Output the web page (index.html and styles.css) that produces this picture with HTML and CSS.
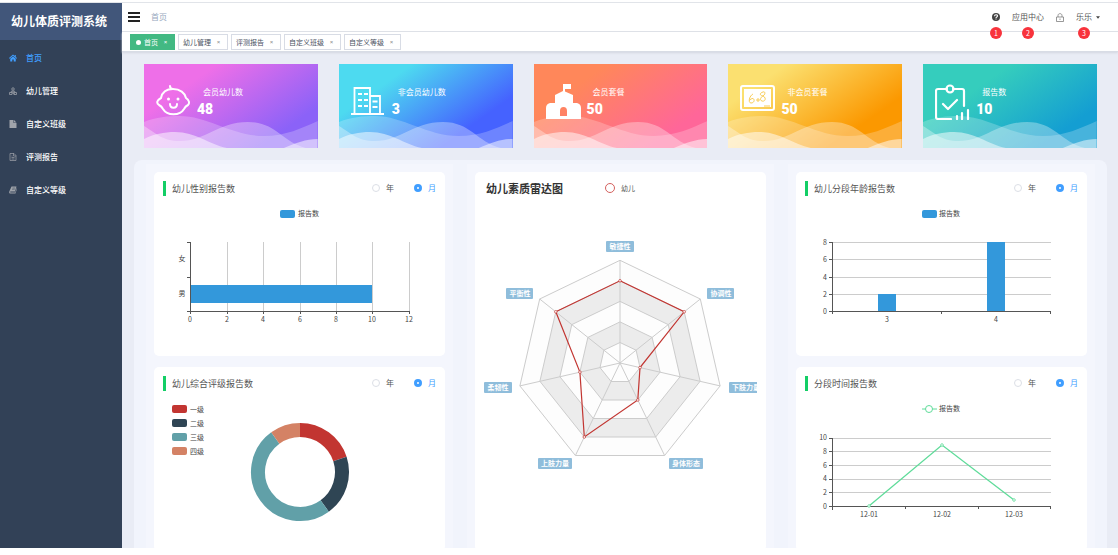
FILE: index.html
```html
<!DOCTYPE html>
<html lang="zh-CN">
<head>
<meta charset="utf-8">
<title>幼儿体质评测系统</title>
<link rel="stylesheet" href="styles.css">
</head>
<body>
<svg class="defs" aria-hidden="true">
  <symbol id="waves" viewBox="0 0 174 84" preserveAspectRatio="none">
    <path fill="#fff" fill-opacity=".22" d="M0 58C12 53 24 52 36 52C64 52 88 72 120 72C142 72 158 64 174 57V84H0Z"/>
    <path fill="#fff" fill-opacity=".32" d="M0 62C12 69 18 77 36 77C62 77 74 58 104 58C132 58 138 78 162 84H0Z"/>
    <path fill="#fff" fill-opacity=".5" d="M0 75C10 70 20 68 31 68C52 68 64 80 83 84H0ZM140 84C152 79 162 75 174 75V84Z"/>
  </symbol>
</svg>
<div class="app">
  <aside class="sidebar">
    <h1 class="logo">幼儿体质评测系统</h1>
    <nav class="menu">
      <a class="menu-item active" href="#"><svg class="menu-icon" viewBox="0 0 16 16"><path fill="currentColor" d="M8 1 0 8l1 1.4 7-6 7 6L16 8l-2.5-2.2V2h-2v2zM8 4.8 2.5 9.5V15h4v-4h3v4h4V9.500z"/></svg>首页</a>
      <a class="menu-item" href="#"><svg class="menu-icon" viewBox="0 0 16 16"><g fill="none" stroke="currentColor" stroke-width="1.5"><circle cx="8" cy="4" r="2.5"/><path d="M5 8h6l1 3M5 8l-1 3M8 8v4M1 11h5v4H1zM6 12h4v3M10 11h5v4h-5z"/></g></svg>幼儿管理</a>
      <a class="menu-item" href="#"><svg class="menu-icon" viewBox="0 0 16 16"><path fill="currentColor" d="M1 0h8v6h6v10H1zM10 0l5 5h-5z"/></svg>自定义班级</a>
      <a class="menu-item" href="#"><svg class="menu-icon" viewBox="0 0 16 16"><path fill="none" stroke="currentColor" stroke-width="1.400" d="M2 1h8l4 4v10H2zM9 1v5h5M5 9h6M5 12h6M5 6h2"/></svg>评测报告</a>
      <a class="menu-item" href="#"><svg class="menu-icon" viewBox="0 0 16 16"><path fill="currentColor" d="M5 1h10l-3 10H3c-1 0-1 2 0 2h9.500L15.500 4 16 5l-3 10H2C0 15 0 12 1 10z"/><path stroke="#324157" d="M7 4h5.500M6 6.500h5.500"/></svg>自定义等级</a>
    </nav>
  </aside>
  <div class="body">
    <header class="topbar">
      <button class="burger" aria-label="菜单"><span></span><span></span><span></span></button>
      <span class="crumb">首页</span>
      <div class="tools">
        <a class="tool" href="#" aria-label="帮助"><svg class="help" viewBox="0 0 16 16"><circle cx="8" cy="8" r="8" fill="#444"/><path fill="none" stroke="#fff" stroke-width="2.200" d="M5 6.500C5 2.500 11 2.500 11 6c0 2-3 2-3 4M8 11.200v2"/></svg><span class="mark">1</span></a>
        <a class="tool" href="#">应用中心<span class="mark">2</span></a>
        <button class="tool" aria-label="锁屏"><svg class="lock" viewBox="0 0 16 18"><path fill="none" stroke="#777" stroke-width="1.500" d="M1 8h14v9H1zM4 8V5c0-5 8-5 8 0v3M8 11v3"/></svg></button>
        <button class="user"><span class="tool">乐乐<span class="mark">3</span></span><svg class="caret" viewBox="0 0 8 5"><path fill="#444" d="M0 0h8L4 5z"/></svg></button>
      </div>
    </header>
    <nav class="tabs">
      <a class="tab current" href="#"><i class="dot"></i>首页<b>×</b></a>
      <a class="tab" href="#">幼儿管理<b>×</b></a>
      <a class="tab" href="#">评测报告<b>×</b></a>
      <a class="tab" href="#">自定义班级<b>×</b></a>
      <a class="tab" href="#">自定义等级<b>×</b></a>
    </nav>
    <main class="main">
      <section class="stats">
        <article class="stat pink"><svg class="waves"><use href="#waves"/></svg>
          <svg class="stat-icon" viewBox="0 0 36 36"><g fill="none" stroke="#fff" stroke-width="2" stroke-linecap="round"><path d="M17 5C10 5 6 9 5 14C1 16 0 19 3 21C5 22 6 23 7 25C11 32 24 32 28 25C29 23 30 22 32 21C34 19 33 16 30 14C29 9 24 5 17 5C15 5 14 4 14 2"/><path d="M14 20C14 25 21 25 21 20"/></g><circle cx="12.500" cy="15" r="1.500" fill="#fff"/><circle cx="22" cy="15" r="1.500" fill="#fff"/></svg>
          <div class="stat-text"><span class="stat-label">会员幼儿数</span><strong>48</strong></div></article>
        <article class="stat blue"><svg class="waves"><use href="#waves"/></svg>
          <svg class="stat-icon" viewBox="0 0 36 36"><path fill="none" stroke="#fff" stroke-width="1.800" d="M0 30h33M3.500 30V4H19v26M19 12h10v18M7 10h4M13 10h4M7 16h4M13 16h4M7 22h4M13 22h4M21.500 17.500h5M21.500 23h5"/></svg>
          <div class="stat-text"><span class="stat-label">非会员幼儿数</span><strong>3</strong></div></article>
        <article class="stat orange"><svg class="waves"><use href="#waves"/></svg>
          <svg class="stat-icon" viewBox="0 0 36 36"><path fill="#fff" fill-rule="evenodd" d="M17 0h8v5h-6v2.500L27 11V19h4q4 1 4 5v11H0V24q0-4 4-5h5V11l8-4zM14 31v-4q0-4 3.500-4t3.500 4v5h-7z"/></svg>
          <div class="stat-text"><span class="stat-label">会员套餐</span><strong>50</strong></div></article>
        <article class="stat yellow"><svg class="waves"><use href="#waves"/></svg>
          <svg class="stat-icon" viewBox="0 0 36 36"><rect x="1" y="2" width="33" height="24" rx="2" fill="none" stroke="#fff" stroke-width="2"/><rect x="4" y="5" width="27" height="18" fill="#fff"/><g fill="none" stroke="#f9cd58" stroke-width="1"><path d="M13 10C9 12 8 19 11 19C15 19 15 14 12 14.500L9.500 16M16 16h4M18 14v4M23 8C19 9 20 12 23 12C27 14 25 18 22 17C19 16 21 13 23 12C26 10 25 7 23 8M24 22h6"/></g></svg>
          <div class="stat-text"><span class="stat-label">非会员套餐</span><strong>50</strong></div></article>
        <article class="stat teal"><svg class="waves"><use href="#waves"/></svg>
          <svg class="stat-icon" viewBox="0 0 36 36"><g fill="none" stroke="#fff" stroke-width="2.200" stroke-linecap="round" stroke-linejoin="round"><path d="M12 5H3q-2 0-2 2v26q0 2 2 2h13M18 5h9q2 0 2 2v15M8 20l5 5 9-9"/><circle cx="15" cy="5" r="3.500"/><path d="M22 32v3M27 29v6M33 26v9"/></g></svg>
          <div class="stat-text"><span class="stat-label">报告数</span><strong>10</strong></div></article>
      </section>

      <section class="panel">
        <div class="column">
          <article class="card">
            <header class="card-head"><h2>幼儿性别报告数</h2><div class="period"><label><input type="radio" name="p1">年</label><label><input type="radio" name="p1" checked>月</label></div></header>
            <svg class="chart" viewBox="0 0 291 152">
              <rect x="126" y="6" width="15" height="8" rx="2" fill="#3398db"/><text x="144" y="12">报告数</text>
              <path class="grid" d="M73 38v69M109 38v69M146 38v69M182 38v69M218 38v69M255 38v69"/>
              <rect x="36" y="81" width="182" height="18" fill="#3398db"/>
              <path class="axis" d="M36 38v72M33 38h3M33 73h3M33 107h222M73 107v3M109 107v3M146 107v3M182 107v3M218 107v3M255 107v3"/>
              <g class="mid"><text x="28" y="57">女</text><text x="28" y="92">男</text>
              <text x="36" y="118">0</text><text x="73" y="118">2</text><text x="109" y="118">4</text><text x="146" y="118">6</text><text x="182" y="118">8</text><text x="218" y="118">10</text><text x="255" y="118">12</text></g>
            </svg>
          </article>
          <article class="card">
            <header class="card-head"><h2>幼儿综合评级报告数</h2><div class="period"><label><input type="radio" name="p2">年</label><label><input type="radio" name="p2" checked>月</label></div></header>
            <svg class="chart" viewBox="0 0 291 152">
              <rect x="18" y="6" width="15" height="8" rx="2" fill="#c23531"/><text x="36" y="13">一级</text>
              <rect x="18" y="20" width="15" height="8" rx="2" fill="#2f4554"/><text x="36" y="27">二级</text>
              <rect x="18" y="34" width="15" height="8" rx="2" fill="#61a0a8"/><text x="36" y="41">三级</text>
              <rect x="18" y="48" width="15" height="8" rx="2" fill="#d48265"/><text x="36" y="55">四级</text>
              <g transform="translate(146 73)" fill="none" stroke-width="14">
                <path stroke="#c23531" d="M0-42A42 42 0 0 1 39.940-12.980"/>
                <path stroke="#2f4554" d="M39.940-12.980A42 42 0 0 1 24.690 33.980"/>
                <path stroke="#61a0a8" d="M24.690 33.980A42 42 0 0 1-24.690-33.980"/>
                <path stroke="#d48265" d="M-24.690-33.980A42 42 0 0 1 0-42"/>
              </g>
            </svg>
          </article>
        </div>

        <div class="column">
          <article class="card tall">
            <header class="radar-head"><h2>幼儿素质雷达图</h2><span class="radar-legend"><i></i>幼儿</span></header>
            <svg class="chart" viewBox="0 0 282 344">
              <g transform="translate(145 159)" stroke="#ccc">
                <path fill="#fdfdfd" d="M0-102.700 80.300-64 100.100 22.900 44.600 92.500H-44.600L-100.100 22.900-80.300-64Z"/>
                <path fill="#ececec" d="M0-82.200 64.200-51.200 80.100 18.300 35.700 74H-35.700L-80.100 18.300-64.200-51.200Z"/>
                <path fill="#fdfdfd" d="M0-61.600 48.200-38.400 60.100 13.700 26.700 55.500H-26.700L-60.100 13.700-48.200-38.400Z"/>
                <path fill="#ececec" d="M0-41.100 32.100-25.600 40.100 9.100 17.800 37H-17.800L-40.100 9.100-32.100-25.600Z"/>
                <path fill="#fdfdfd" d="M0-20.500 16.100-12.800 20 4.600 8.900 18.500H-8.900L-20 4.600-16.100-12.800Z"/>
                <path d="M0 0V-102.700M0 0 80.300-64M0 0 100.100 22.900M0 0 44.600 92.500M0 0-44.600 92.500M0 0-100.100 22.900M0 0-80.300-64"/>
                <g stroke="#c23531"><path fill="none" stroke-width="1.200" d="M0-82.200 64.200-51.200 20 4.600 17.800 37-35.700 74-40.100 9.100-64.200-51.200Z"/>
                <g fill="#fff" stroke-width=".7"><circle cy="-82.200" r="1.300"/><circle cx="64.200" cy="-51.200" r="1.300"/><circle cx="20" cy="4.600" r="1.300"/><circle cx="17.800" cy="37" r="1.300"/><circle cx="-35.700" cy="74" r="1.300"/><circle cx="-40.100" cy="9.100" r="1.300"/><circle cx="-64.200" cy="-51.200" r="1.300"/></g></g>
              </g>
              <g fill="#8fbddb"><rect x="131" y="37" width="28" height="11" rx="1"/><rect x="31" y="84" width="27" height="11" rx="1"/><rect x="232" y="84" width="27" height="11" rx="1"/><rect x="9" y="178" width="28" height="11" rx="1"/><rect x="254" y="178" width="34" height="11" rx="1"/><rect x="63" y="254" width="34" height="11" rx="1"/><rect x="194" y="254" width="34" height="11" rx="1"/></g>
              <g class="tag"><text x="145" y="45">敏捷性</text><text x="45" y="92">平衡性</text><text x="246" y="92">协调性</text><text x="23" y="186">柔韧性</text><text x="271" y="186">下肢力量</text><text x="80" y="262">上肢力量</text><text x="211" y="262">身体形态</text></g>
            </svg>
          </article>
        </div>

        <div class="column">
          <article class="card">
            <header class="card-head"><h2>幼儿分段年龄报告数</h2><div class="period"><label><input type="radio" name="p3">年</label><label><input type="radio" name="p3" checked>月</label></div></header>
            <svg class="chart" viewBox="0 0 291 152">
              <rect x="126" y="6" width="15" height="8" rx="2" fill="#3398db"/><text x="143" y="12">报告数</text>
              <path class="grid" d="M36 38h219M36 55h219M36 73h219M36 90h219"/>
              <rect x="82" y="90" width="18" height="17" fill="#3398db"/><rect x="191" y="38" width="18" height="69" fill="#3398db"/>
              <path class="axis" d="M36 38v72M33 38h3M33 55h3M33 73h3M33 90h3M33 107h222M145 107v3M254 107v3"/>
              <g class="end"><text x="31" y="41">8</text><text x="31" y="58">6</text><text x="31" y="76">4</text><text x="31" y="93">2</text><text x="31" y="110">0</text></g>
              <g class="mid"><text x="91" y="118">3</text><text x="200" y="118">4</text></g>
            </svg>
          </article>
          <article class="card">
            <header class="card-head"><h2>分段时间报告数</h2><div class="period"><label><input type="radio" name="p4">年</label><label><input type="radio" name="p4" checked>月</label></div></header>
            <svg class="chart" viewBox="0 0 291 152">
              <g stroke="#5fdc9a" fill="#fff"><path d="M126 10h15"/><circle cx="133" cy="10" r="3.500"/></g><text x="143" y="12">报告数</text>
              <path class="grid" d="M36 39h219M36 52h219M36 66h219M36 80h219M36 93h219"/>
              <path class="axis" d="M36 39v72M33 39h3M33 52h3M33 66h3M33 80h3M33 93h3M33 107h222M109 107v3M182 107v3M254 107v3"/>
              <g stroke="#5fdc9a" fill="none"><path stroke-width="1.300" d="M73 107 146 46 218 101"/><g fill="#fff" stroke-width=".8"><circle cx="73" cy="107" r="1.300"/><circle cx="146" cy="46" r="1.300"/><circle cx="218" cy="101" r="1.300"/></g></g>
              <g class="end"><text x="31" y="41">10</text><text x="31" y="55">8</text><text x="31" y="69">6</text><text x="31" y="82">4</text><text x="31" y="96">2</text><text x="31" y="110">0</text></g>
              <g class="mid"><text x="73" y="118">12-01</text><text x="146" y="118">12-02</text><text x="218" y="118">12-03</text></g>
            </svg>
          </article>
        </div>
      </section>
    </main>
  </div>
</div>
</body>
</html>
```
FILE: styles.css
```css
* { box-sizing: border-box; }
body {
  margin: 0;
  height: 100vh;
  padding: 2px 0 7px;
  display: flex;
  background: #fff;
  color: #555;
  font: 8px/12px "Noto Sans CJK SC", "Noto Sans", sans-serif;
}
a { color: inherit; text-decoration: none; }
button { border: 0; padding: 0; background: none; color: inherit; font: inherit; }
h1, h2 { margin: 0; }
.defs { position: absolute; width: 0; height: 0; }

.app { flex: 1; display: flex; border-top: 1px solid #e1e4e9; overflow: hidden; }

.sidebar { width: 122px; background: #324157; color: #fff; }
.logo { padding: 9px 0 10px 11px; background: #41567a; font-size: 12px; line-height: 18px; }
.menu { padding-top: 1px; }
.menu-item { display: flex; align-items: center; gap: 9px; height: 33px; padding-left: 9px; font-weight: 500; }
.menu-icon { width: 8px; height: 8px; color: #a0a4ab; }
.active, .active .menu-icon { color: #409eff; }

.body { flex: 1; min-width: 0; display: flex; flex-direction: column; background: #e9ecf5; }
.topbar { display: flex; align-items: center; height: 29px; padding: 0 18px 0 6px; background: #fff; border-bottom: 1px solid #dfe2e8; }
.burger { display: grid; gap: 2px; width: 12px; margin-right: 11px; }
.burger span { height: 2px; background: #222; }
.crumb { color: #97a8be; }
.tools { margin-left: auto; display: flex; align-items: center; gap: 12px; }
.tool { position: relative; display: flex; align-items: center; }
.user { display: flex; align-items: center; gap: 4px; }
.help { width: 8px; height: 8px; }
.lock { width: 8px; height: 9px; }
.caret { width: 4px; height: 3px; }
.mark {
  position: absolute; top: 50%; left: 50%; width: 12px; height: 12px; margin: 10px 0 0 -6px;
  border-radius: 50%; background: #f8333c; color: #fff; font-size: 7px; line-height: 12px; text-align: center;
}
.tabs { display: flex; gap: 3px; padding: 2px 8px 1px; background: #fff; border-bottom: 1px solid #d8dce5; box-shadow: 0 1px 2px #d4d7e0; }
.tab { display: flex; align-items: center; height: 16px; padding: 0 6px 0 4px; border: 1px solid #d8dce5; color: #495060; font-size: 7px; }
.tab b { width: 5px; margin-left: 5px; color: #888; font: 6px/12px "Liberation Sans", sans-serif; text-align: center; }
.tab.current b { color: #fff; }
.current { border-color: #42b983; background: #42b983; color: #fff; }
.dot { width: 5px; height: 5px; margin: 0 3px 0 1px; border-radius: 50%; background: #fff; }

.main { flex: 1; min-height: 0; padding: 12px 11px 0 12px; }
.stats { display: grid; grid-template-columns: repeat(5, 1fr); gap: 21px; padding: 0 10px; margin-bottom: 12px; }
.stat { position: relative; display: flex; height: 84px; padding: 20px 12px; color: #fff; }
.waves { position: absolute; inset: 0; width: 100%; height: 100%; }
.stat-icon { position: relative; width: 36px; height: 36px; }
.stat-text { position: relative; display: flex; flex-direction: column; gap: 2px; margin-left: 5px; padding-top: 2px; }
.stat-label { padding-left: 6px; }
.stat strong { font: 900 14px/18px Roboto, sans-serif; }
.pink { background: linear-gradient(145deg, #ee6fe8 25%, #8b62f8 80%); }
.blue { background: linear-gradient(145deg, #4ddaf0 25%, #4562ff 75%); }
.orange { background: linear-gradient(145deg, #ff875a 25%, #ff6699 80%); }
.yellow { background: linear-gradient(145deg, #fbe070 20%, #fb9800 75%); }
.teal { background: linear-gradient(145deg, #35cdbd 30%, #149ed2 80%); }

.panel { display: grid; grid-template-columns: repeat(3, 1fr); gap: 30px; padding: 12px 20px; border-radius: 8px; background: #f1f4fc; }
.column { display: flex; flex-direction: column; gap: 11px; box-shadow: 0 0 0 8px #f4f6fd; background: #f4f6fd; }
.card { border-radius: 5px; background: #fff; }
.tall { flex: 1; padding-right: 9px; }
.card-head { display: flex; align-items: center; justify-content: space-between; height: 32px; padding: 0 9px; }
.card-head h2 { padding-left: 6px; border-left: 3px solid #13ce66; font-size: 9px; font-weight: 400; line-height: 15px; }
.period { display: flex; gap: 20px; }
.period label { display: flex; align-items: center; gap: 6px; }
.period label:has(:checked) { color: #409eff; }
.period input { appearance: none; width: 8px; height: 8px; margin: 0; border: 1px solid #dcdfe6; border-radius: 50%; background: #fff; }
.period input:checked { border: 3px solid #409eff; }
.radar-head { display: flex; align-items: center; gap: 42px; height: 32px; padding-left: 11px; }
.radar-head h2 { color: #333; font-size: 11px; font-weight: 700; }
.radar-legend { display: flex; align-items: center; gap: 6px; font-size: 7px; }
.radar-legend i { width: 10px; height: 10px; border: 1px solid #d4605d; border-radius: 50%; }

.chart { display: block; width: 100%; font-size: 7px; fill: #444; }
.grid { fill: none; stroke: #ccc; shape-rendering: crispEdges; }
.axis { fill: none; stroke: #555; shape-rendering: crispEdges; }
.mid, .tag { text-anchor: middle; }
.end { text-anchor: end; }
.tag { fill: #fff; font-weight: 700; }
```
